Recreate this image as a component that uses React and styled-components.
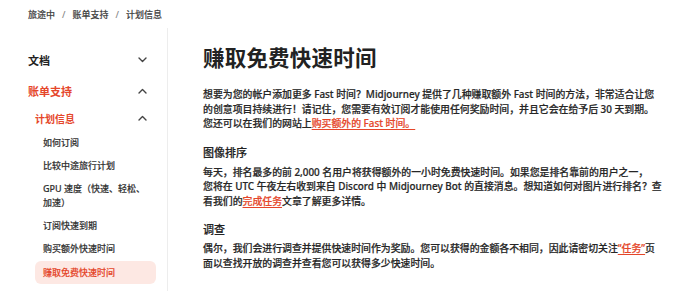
import React from "react";
import styled, { createGlobalStyle } from "styled-components";

const GlobalStyle = createGlobalStyle`
  html, body {
    margin: 0;
    padding: 0;
    background: #fff;
  }
  body {
    font-family: "Noto Sans", "Noto Sans CJK SC", sans-serif;
    color: #2b2b2b;
    overflow: hidden;
  }
`;

const RED = "#e5462a";

const Page = styled.div`
  width: 680px;
  height: 291px;
  display: flex;
  flex-direction: column;
  overflow: hidden;
`;

const Breadcrumb = styled.nav`
  height: 28px;
  padding-left: 28px;
  display: flex;
  align-items: center;
  gap: 7px;
  font-size: 9px;
  font-weight: 500;
  color: #444;
  -webkit-text-stroke: 0.15px #444;
  & span.sep {
    color: #888;
    -webkit-text-stroke: 0;
  }
`;

const Body = styled.div`
  flex: 1;
  display: flex;
  min-height: 0;
`;

const Sidebar = styled.aside`
  width: 168px;
  flex-shrink: 0;
  border-right: 1px solid #ededed;
  padding-top: 16px;
  box-sizing: border-box;
  display: flex;
  flex-direction: column;
`;

const NavRow = styled.div`
  display: flex;
  align-items: center;
  justify-content: space-between;
  height: ${(p) => p.$h}px;
  padding-left: ${(p) => p.$indent}px;
  padding-right: 20px;
  font-size: ${(p) => p.$size}px;
  font-weight: 700;
  color: ${(p) => (p.$active ? RED : "#222")};
`;

const SubList = styled.div`
  display: flex;
  flex-direction: column;
  margin: 1px 0 0 35px;
  width: 121px;
`;

const SubItem = styled.div`
  padding: 4.5px 8px;
  font-size: 9px;
  line-height: 14px;
  font-weight: 500;
  border-radius: 6px;
  color: ${(p) => (p.$active ? RED : "#333")};
  -webkit-text-stroke: 0.15px ${(p) => (p.$active ? RED : "#333")};
  background: ${(p) => (p.$active ? "#fde8e3" : "transparent")};
  margin-top: ${(p) => (p.$active ? "1px" : "0")};
`;

const Main = styled.main`
  flex: 1;
  padding: 0 20px 0 35px;
  min-width: 0;
`;

const Title = styled.h1`
  margin: 16px 0 0;
  font-size: 21.5px;
  line-height: 27px;
  font-weight: 700;
  color: #222;
  letter-spacing: 0.2px;
`;

const Para = styled.p`
  margin: ${(p) => p.$mt}px 0 0;
  font-size: 9.9px;
  line-height: 14.5px;
  font-weight: 500;
  white-space: nowrap;
  color: #262626;
  -webkit-text-stroke: 0.2px #262626;
`;

const SubHeading = styled.h2`
  margin: 14px 0 0;
  font-size: 11px;
  line-height: 16px;
  font-weight: 500;
  color: #222;
  -webkit-text-stroke: 0.2px #222;
`;

const Link = styled.a`
  color: ${RED};
  -webkit-text-stroke: 0.2px ${RED};
  text-decoration: underline;
  text-underline-offset: 2px;
  text-decoration-thickness: 1px;
`;

const Chevron = ({ up }) => (
  <svg width="9" height="6" viewBox="0 0 9 6" fill="none">
    <polyline
      points={up ? "1,5 4.5,1.5 8,5" : "1,1 4.5,4.5 8,1"}
      stroke="#444"
      strokeWidth="1.4"
      strokeLinecap="round"
      strokeLinejoin="round"
    />
  </svg>
);

const subItems = [
  "如何订阅",
  "比较中途旅行计划",
  "GPU 速度（快速、轻松、加速）",
  "订阅快速到期",
  "购买额外快速时间",
  "赚取免费快速时间",
];

export default function App() {
  return (
    <Page>
      <GlobalStyle />
      <Breadcrumb>
        <span>旅途中</span>
        <span className="sep">/</span>
        <span>账单支持</span>
        <span className="sep">/</span>
        <span>计划信息</span>
      </Breadcrumb>
      <Body>
        <Sidebar>
          <NavRow $h={31} $indent={28} $size={11}>
            文档
            <Chevron />
          </NavRow>
          <NavRow $h={31} $indent={28} $size={11} $active>
            账单支持
            <Chevron up />
          </NavRow>
          <NavRow $h={24} $indent={35} $size={10} $active>
            计划信息
            <Chevron up />
          </NavRow>
          <SubList>
            {subItems.map((t, i) => (
              <SubItem key={t} $active={i === subItems.length - 1}>
                {t}
              </SubItem>
            ))}
          </SubList>
        </Sidebar>
        <Main>
          <Title>赚取免费快速时间</Title>
          <Para $mt={16}>
            想要为您的帐户添加更多 Fast 时间？Midjourney 提供了几种赚取额外 Fast 时间的方法，非常适合让您
            <br />
            的创意项目持续进行！请记住，您需要有效订阅才能使用任何奖励时间，并且它会在给予后 30 天到期。
            <br />
            您还可以在我们的网站上<Link>购买额外的 Fast 时间。</Link>
          </Para>
          <SubHeading>图像排序</SubHeading>
          <Para $mt={4}>
            每天，排名最多的前 2,000 名用户将获得额外的一小时免费快速时间。如果您是排名靠前的用户之一，
            <br />
            您将在 UTC 午夜左右收到来自 Discord 中 Midjourney Bot 的直接消息。想知道如何对图片进行排名？查
            <br />
            看我们的<Link>完成任务</Link>文章了解更多详情。
          </Para>
          <SubHeading>调查</SubHeading>
          <Para $mt={3}>
            偶尔，我们会进行调查并提供快速时间作为奖励。您可以获得的金额各不相同，因此请密切关注<Link>“任务”</Link>页
            <br />
            面以查找开放的调查并查看您可以获得多少快速时间。
          </Para>
        </Main>
      </Body>
    </Page>
  );
}
